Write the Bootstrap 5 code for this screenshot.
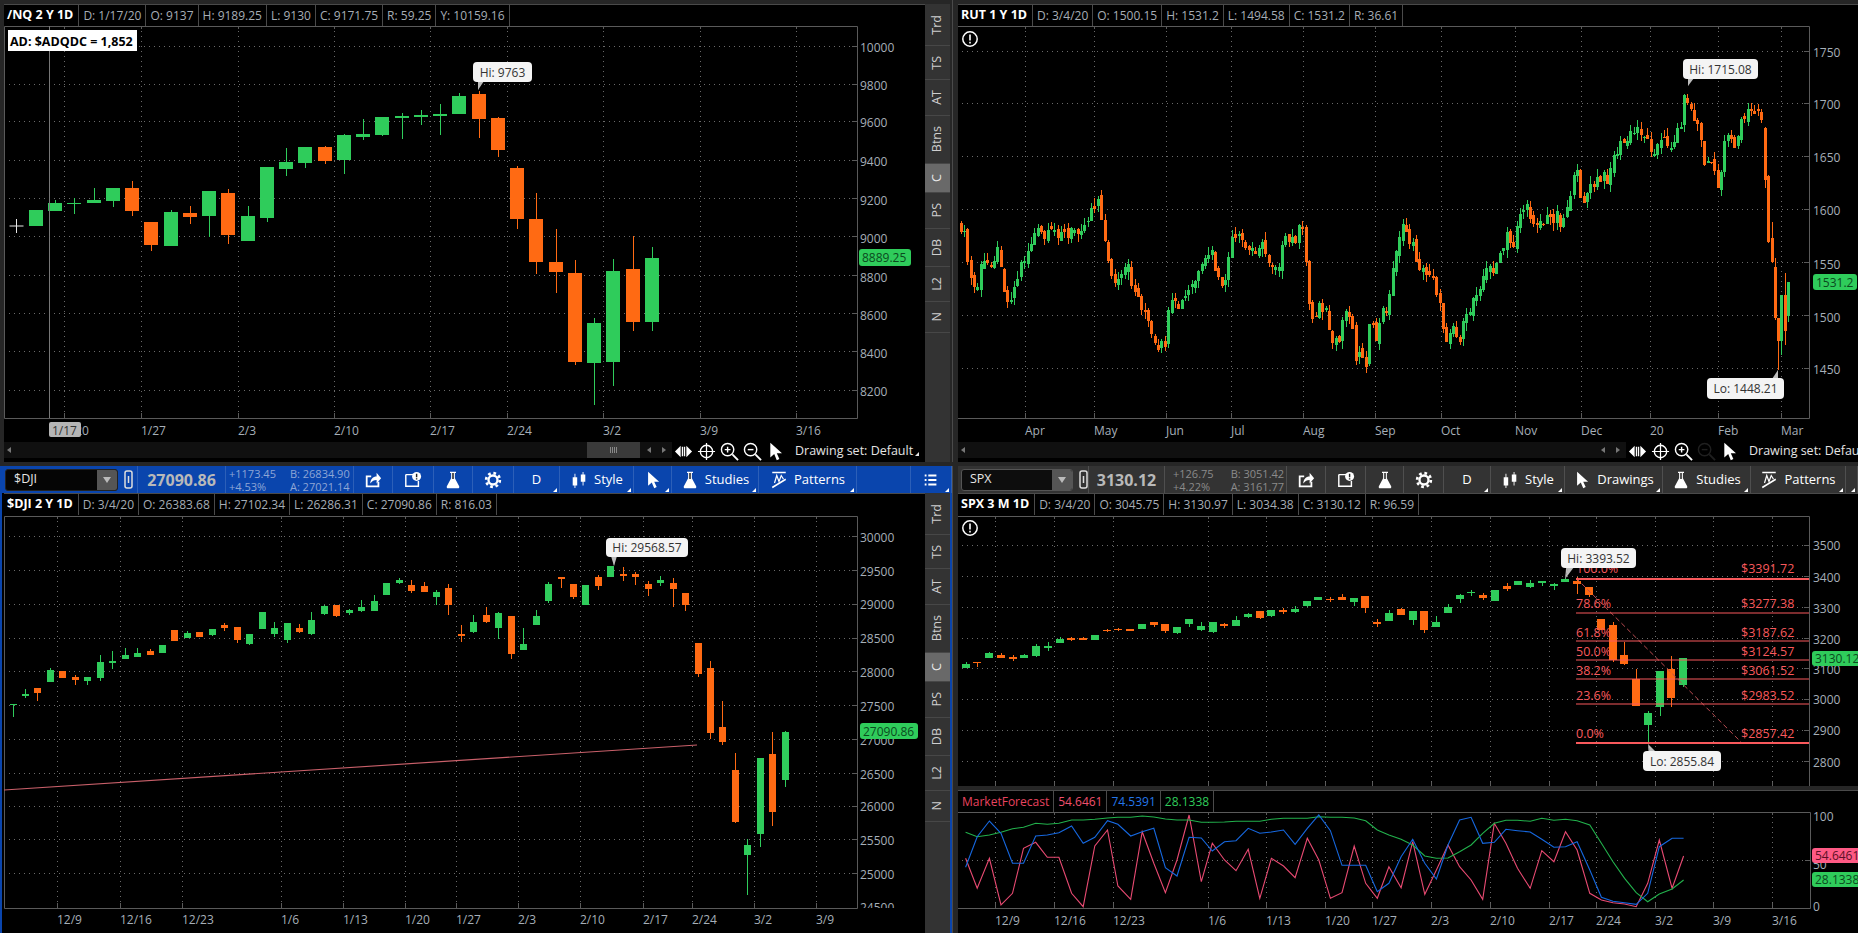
<!DOCTYPE html>
<html lang="en">
<head>
    <meta charset="UTF-8">
    <meta name="viewport" content="width=device-width, initial-scale=1.0">
    <title>Charts</title>
    <link rel="stylesheet" href="https://cdn.jsdelivr.net/npm/bootstrap@5.3.0/dist/css/bootstrap.min.css">
    <style>
        html, body {
            height: 933px;
            overflow: hidden;
        }
        body {
            background-color: #262626;
            font-family: "Open Sans", "Liberation Sans", sans-serif;
            font-size: 12px;
            line-height: 1;
            color: #a6adb5;
        }
        .ws-grid {
            display: grid;
            grid-template-columns: 952px 906px;
            grid-template-rows: 462px 467px;
            column-gap: 0;
            row-gap: 4px;
            height: 933px;
        }
        .pane-top { padding-top: 4px; }
        .pane-left { padding-left: 4px; }
        .pane-right { padding-left: 5px; border-left: 1px solid #4a4a4a; }
        .pane-dji {
            background-color: #0a45ad;
            padding: 0 2px 0 2px;
        }
        .pane-spx { padding-left: 5px; border-left: 1px solid #4a4a4a; }
        .chart-col { width: 921px; min-width: 0; }
        .dji-body { background: #262626; }
        .dji-col { width: 923px; padding-left: 2px; background: #000; }

        .qhead {
            height: 22px;
            background: #000;
            border-top: 1px solid #4a4a4a;
            flex: none;
            white-space: nowrap;
        }
        .qhead span {
            display: flex;
            align-items: center;
            padding: 0 4px;
            border-right: 1px solid #4a4a4a;
        }
        .qhead .qtitle { font-weight: 700; font-size: 12.5px; color: #fff; padding: 0 5px 0 3px; }
        .qhead .mf-name { color: #e8435f; }
        .qhead .mf-red { color: #f0506e; }
        .qhead .mf-blue { color: #2477ea; }
        .qhead .mf-green { color: #2fcc5b; }

        svg.plot {
            display: block;
            width: 100%;
            flex: 1;
            min-height: 0;
            background: #000;
            font-family: "Open Sans", "Liberation Sans", sans-serif;
            font-size: 12px;
        }
        .plot-spx { flex: none !important; height: 271px; }
        .mf-gap { height: 4px; background: #262626; flex: none; }
        .mf-head { background: #000; }

        .scroll-row {
            height: 20px;
            background: #000;
            flex: none;
            color: #e4e4e4;
            font-size: 12.5px;
            white-space: nowrap;
        }
        .scroll-track {
            height: 16px;
            background: #101010;
            position: relative;
            flex: none;
        }
        .track-nq { width: 668px; }
        .track-rut { width: 668px; }
        .scroll-thumb {
            position: absolute;
            left: 583px;
            top: 0;
            width: 53px;
            height: 16px;
            background: #3a3a3a;
        }
        .scroll-thumb::after {
            content: "";
            position: absolute;
            left: 23px;
            top: 5px;
            width: 7px;
            height: 6px;
            background: repeating-linear-gradient(90deg, #888 0 1px, transparent 1px 2px);
        }
        .arr {
            position: absolute;
            top: 5px;
            width: 0;
            height: 0;
            border-top: 3px solid transparent;
            border-bottom: 3px solid transparent;
        }
        .arr-l { border-right: 4px solid #777; }
        .arr-r { border-left: 4px solid #777; }
        .arr-a { left: 3px; }
        .arr-b { left: 643px; }
        .arr-c { left: 658px; }
        .tool-set { gap: 4px; padding-left: 2px; height: 18px; }
        .tool-set svg { width: 19px; height: 19px; display: block; flex: none; }
        .set-label { margin-left: 6px; position: relative; padding-right: 6px; }
        .set-label::after, .cell-mark::after {
            content: "";
            position: absolute;
            right: 0;
            bottom: 1px;
            border-left: 4px solid transparent;
            border-bottom: 4px solid #e4e4e4;
        }
        .tool-dim { opacity: .12; }

        .side-tabs {
            width: 25px;
            background: #333;
            flex: none;
        }
        .side-tabs div {
            display: flex;
            align-items: center;
            justify-content: center;
            border-bottom: 1px solid #474747;
            color: #cfcfcf;
            font-size: 12.5px;
        }
        .side-tabs div span { writing-mode: vertical-rl; transform: rotate(180deg); }
        .side-tabs .tab-on { background: #696969; color: #e8e8e8; }
        .h-trd { height: 42px; }
        .h-ts { height: 34px; }
        .h-at { height: 36px; }
        .h-btns { height: 48px; }
        .h-c { height: 29px; }
        .h-ps { height: 36px; }
        .h-db { height: 38px; }
        .h-l2 { height: 35px; }
        .h-n { height: 31px; }

        .tbar {
            display: grid;
            height: 27px;
            flex: none;
            align-items: center;
            color: #fff;
            white-space: nowrap;
        }
        .tbar-dji {
            background: #0a45ad;
            grid-template-columns: 136px 88px 128px 39px 41px 39px 41px 46px 74px 38px 87px 98px 54px 41px;
        }
        .tbar-spx {
            background: #333;
            grid-template-columns: 131px 76px 122px 39px 40px 38px 40px 47px 74px 98px 88px 95px 12px;
        }
        .tcell {
            height: 27px;
            display: flex;
            align-items: center;
            justify-content: center;
            gap: 6px;
            position: relative;
            border-right: 1px solid rgba(255,255,255,.14);
            font-size: 13px;
        }
        .tcell svg { width: 18px; height: 18px; flex: none; }
        .cell-mark::after { right: 2px; border-bottom-color: #fff; }
        .sym-cell { justify-content: flex-start; gap: 0; }
        .sym-box {
            margin-left: 3px;
            width: 113px;
            height: 22px;
            background: #050505;
            border: 1px solid #222;
            border-radius: 3px;
            display: flex;
            justify-content: space-between;
            align-items: center;
            padding-left: 8px;
            font-size: 12.5px;
            color: #e6e6e6;
            flex: none;
        }
        .sym-spx { width: 112px; background: #0d0d0d; border-color: #555; }
        .sym-drop {
            width: 20px;
            height: 20px;
            background: #555;
            display: flex;
            align-items: center;
            justify-content: center;
            border-radius: 0 2px 2px 0;
        }
        .sym-drop::after {
            content: "";
            border-left: 4px solid transparent;
            border-right: 4px solid transparent;
            border-top: 6px solid #bbb;
        }
        .tcell svg.link-ico { width: 12px; height: 20px; margin-left: 5px; }
        .tlast { font-size: 16px; font-weight: 700; color: #b9b9b9; }
        .tdelta {
            justify-content: flex-start;
            gap: 14px;
            padding-left: 3px;
            font-size: 11px;
            line-height: 13px;
        }
        .tbar-dji .tdelta { color: #8ea6d6; }
        .tbar-spx .tdelta { color: #8b8b8b; padding-left: 8px; gap: 17px; }
    </style>
</head>
<body>
    <!-- shared toolbar icons -->
    <svg width="0" height="0" class="position-absolute">
        <symbol id="i-share" viewBox="0 0 20 20">
            <path fill="#fff" d="M2 5h6v2H4v9h11v-4h2v6H2z"/>
            <path fill="#fff" d="M7 14c0-5 3-8 7-8V2l5 6-5 6V10c-3 0-5 1-7 4z"/>
        </symbol>
        <symbol id="i-alert" viewBox="0 0 20 20">
            <path fill="none" stroke="#fff" stroke-width="1.6" d="M2 4h10M2 4v13h14v-6"/>
            <circle cx="14" cy="6" r="5" fill="#fff"/>
            <path stroke="#222" stroke-width="1.6" d="M14 3v4M14 8v1.4"/>
        </symbol>
        <symbol id="i-flask" viewBox="0 0 20 24">
            <path fill="#fff" d="M6 1h8v1.6h-1.5v7.2l5.7 10.4c.6 1.2-.2 2.8-1.6 2.8H3.4c-1.4 0-2.2-1.6-1.6-2.8L7.5 9.8V2.6H6z"/>
            <path fill="#222" opacity=".85" d="M8.8 2.6h2.4v8H8.8z"/>
        </symbol>
        <symbol id="i-gear" viewBox="0 0 20 20">
            <circle cx="10" cy="10" r="7.6" fill="none" stroke="#fff" stroke-width="3" stroke-dasharray="3 3"/>
            <circle cx="10" cy="10" r="5" fill="none" stroke="#fff" stroke-width="2.6"/>
        </symbol>
        <symbol id="i-style" viewBox="0 0 20 20">
            <path fill="#fff" d="M3 7h5v9H3zM5 3h1v16H5zM12 4h5v8h-5zM14 1h1v15h-1z"/>
        </symbol>
        <symbol id="i-arrow" viewBox="0 0 20 22">
            <path fill="#fff" d="M4 1v17l4.5-4 3 7 3-1.4-3-6.6h6z"/>
        </symbol>
        <symbol id="i-patterns" viewBox="0 0 22 24">
            <path fill="#fff" d="M2 1h18v2H2z"/>
            <path fill="none" stroke="#fff" stroke-width="1.6" d="M5 16 8 6l3 8 3-8 3 5"/>
            <path stroke="#fff" stroke-width="2" d="M2 22 20 11"/>
        </symbol>
        <symbol id="i-menu" viewBox="0 0 20 20">
            <path fill="#fff" d="M3 4h2v2H3zM7 4h9v2H7zM3 9h2v2H3zM7 9h9v2H7zM3 14h2v2H3zM7 14h9v2H7z"/>
        </symbol>
        <symbol id="i-link" viewBox="0 0 12 20">
            <rect x="2" y="1" width="7" height="17" rx="2" fill="none" stroke="#ddd" stroke-width="1.5"/>
            <path stroke="#ddd" stroke-width="1.5" d="M5.5 6v7"/>
        </symbol>
        <symbol id="i-pan" viewBox="0 0 20 20">
            <path fill="#fff" d="M7 4v12L1 10zM13 4v12l6-6zM8.2 5h1.4v10H8.2zM10.4 5h1.4v10h-1.4z"/>
        </symbol>
        <symbol id="i-cross" viewBox="0 0 20 20">
            <circle cx="10" cy="10" r="6.5" fill="none" stroke="#fff" stroke-width="1.5"/>
            <path stroke="#fff" stroke-width="1.3" d="M10 1v18M1 10h18"/>
        </symbol>
        <symbol id="i-zin" viewBox="0 0 20 20">
            <circle cx="8" cy="8" r="6.5" fill="none" stroke="#fff" stroke-width="1.5"/>
            <path stroke="#fff" stroke-width="1.5" d="M5 8h6M8 5v6"/>
            <path stroke="#fff" stroke-width="2" d="M13 13l6 6"/>
        </symbol>
        <symbol id="i-zout" viewBox="0 0 20 20">
            <circle cx="8" cy="8" r="6.5" fill="none" stroke="#fff" stroke-width="1.5"/>
            <path stroke="#fff" stroke-width="1.5" d="M5 8h6"/>
            <path stroke="#fff" stroke-width="2" d="M13 13l6 6"/>
        </symbol>
    </svg>

    <div class="ws-grid">
        <!-- /NQ -->
        <div class="pane-top pane-left d-flex">
            <div class="chart-col d-flex flex-column">
                <div class="qhead d-flex">
                    <span class="qtitle">/NQ 2 Y 1D</span>
                    <span>D: 1/17/20</span><span>O: 9137</span><span>H: 9189.25</span><span>L: 9130</span><span>C: 9171.75</span><span>R: 59.25</span><span>Y: 10159.16</span>
                </div>
                <svg class="plot" id="chart-nq"></svg>
                <div class="scroll-row d-flex align-items-start">
                    <div class="scroll-track track-nq">
                        <i class="arr arr-l arr-a"></i>
                        <div class="scroll-thumb"></div>
                        <i class="arr arr-l arr-b"></i>
                        <i class="arr arr-r arr-c"></i>
                    </div>
                    <div class="tool-set d-flex align-items-center">
                        <svg><use href="#i-pan"/></svg><svg><use href="#i-cross"/></svg><svg><use href="#i-zin"/></svg><svg><use href="#i-zout"/></svg><svg><use href="#i-arrow"/></svg>
                        <span class="set-label">Drawing set: Default</span>
                    </div>
                </div>
            </div>
            <div class="side-tabs">
                <div class="h-trd"><span>Trd</span></div><div class="h-ts"><span>TS</span></div><div class="h-at"><span>AT</span></div><div class="h-btns"><span>Btns</span></div><div class="h-c tab-on"><span>C</span></div><div class="h-ps"><span>PS</span></div><div class="h-db"><span>DB</span></div><div class="h-l2"><span>L2</span></div><div class="h-n"><span>N</span></div>
            </div>
        </div>

        <!-- RUT -->
        <div class="pane-top pane-right d-flex flex-column overflow-hidden">
            <div class="qhead d-flex">
                <span class="qtitle">RUT 1 Y 1D</span>
                <span>D: 3/4/20</span><span>O: 1500.15</span><span>H: 1531.2</span><span>L: 1494.58</span><span>C: 1531.2</span><span>R: 36.61</span>
            </div>
            <svg class="plot" id="chart-rut"></svg>
            <div class="scroll-row d-flex align-items-start">
                <div class="scroll-track track-rut">
                    <i class="arr arr-l arr-a"></i>
                    <i class="arr arr-l arr-b"></i>
                    <i class="arr arr-r arr-c"></i>
                </div>
                <div class="tool-set d-flex align-items-center">
                    <svg><use href="#i-pan"/></svg><svg><use href="#i-cross"/></svg><svg><use href="#i-zin"/></svg><svg class="tool-dim"><use href="#i-zout"/></svg><svg><use href="#i-arrow"/></svg>
                    <span class="set-label">Drawing set: Default</span>
                </div>
            </div>
        </div>

        <!-- $DJI -->
        <div class="pane-dji d-flex flex-column">
            <div class="tbar tbar-dji">
                <div class="tcell sym-cell"><div class="sym-box">$DJI<span class="sym-drop"></span></div><svg class="link-ico"><use href="#i-link"/></svg></div>
                <div class="tcell tlast">27090.86</div>
                <div class="tcell tdelta"><div>+1173.45<br>+4.53%</div><div>B: 26834.90<br>A: 27021.14</div></div>
                <div class="tcell"><svg><use href="#i-share"/></svg></div>
                <div class="tcell"><svg><use href="#i-alert"/></svg></div>
                <div class="tcell"><svg><use href="#i-flask"/></svg></div>
                <div class="tcell"><svg><use href="#i-gear"/></svg></div>
                <div class="tcell cell-mark">D</div>
                <div class="tcell cell-mark"><svg><use href="#i-style"/></svg>Style</div>
                <div class="tcell cell-mark"><svg><use href="#i-arrow"/></svg></div>
                <div class="tcell cell-mark"><svg><use href="#i-flask"/></svg>Studies</div>
                <div class="tcell cell-mark"><svg><use href="#i-patterns"/></svg>Patterns</div>
                <div class="tcell"></div>
                <div class="tcell cell-mark"><svg><use href="#i-menu"/></svg></div>
            </div>
            <div class="d-flex flex-fill dji-body">
                <div class="dji-col d-flex flex-column">
                    <div class="qhead d-flex">
                        <span class="qtitle">$DJI 2 Y 1D</span>
                        <span>D: 3/4/20</span><span>O: 26383.68</span><span>H: 27102.34</span><span>L: 26286.31</span><span>C: 27090.86</span><span>R: 816.03</span>
                    </div>
                    <svg class="plot" id="chart-dji"></svg>
                </div>
                <div class="side-tabs">
                    <div class="h-trd"><span>Trd</span></div><div class="h-ts"><span>TS</span></div><div class="h-at"><span>AT</span></div><div class="h-btns"><span>Btns</span></div><div class="h-c tab-on"><span>C</span></div><div class="h-ps"><span>PS</span></div><div class="h-db"><span>DB</span></div><div class="h-l2"><span>L2</span></div><div class="h-n"><span>N</span></div>
                </div>
            </div>
        </div>

        <!-- SPX -->
        <div class="pane-spx d-flex flex-column overflow-hidden">
            <div class="tbar tbar-spx">
                <div class="tcell sym-cell"><div class="sym-box sym-spx">SPX<span class="sym-drop"></span></div><svg class="link-ico"><use href="#i-link"/></svg></div>
                <div class="tcell tlast">3130.12</div>
                <div class="tcell tdelta"><div>+126.75<br>+4.22%</div><div>B: 3051.42<br>A: 3161.77</div></div>
                <div class="tcell"><svg><use href="#i-share"/></svg></div>
                <div class="tcell"><svg><use href="#i-alert"/></svg></div>
                <div class="tcell"><svg><use href="#i-flask"/></svg></div>
                <div class="tcell"><svg><use href="#i-gear"/></svg></div>
                <div class="tcell cell-mark">D</div>
                <div class="tcell cell-mark"><svg><use href="#i-style"/></svg>Style</div>
                <div class="tcell cell-mark"><svg><use href="#i-arrow"/></svg>Drawings</div>
                <div class="tcell cell-mark"><svg><use href="#i-flask"/></svg>Studies</div>
                <div class="tcell cell-mark"><svg><use href="#i-patterns"/></svg>Patterns</div>
                <div class="tcell cell-mark"></div>
            </div>
            <div class="qhead d-flex">
                <span class="qtitle">SPX 3 M 1D</span>
                <span>D: 3/4/20</span><span>O: 3045.75</span><span>H: 3130.97</span><span>L: 3034.38</span><span>C: 3130.12</span><span>R: 96.59</span>
            </div>
            <svg class="plot plot-spx" id="chart-spx"></svg>
            <div class="mf-gap"></div>
            <div class="qhead mf-head d-flex">
                <span class="mf-name">MarketForecast</span><span class="mf-red">54.6461</span><span class="mf-blue">74.5391</span><span class="mf-green">28.1338</span>
            </div>
            <svg class="plot" id="chart-mf"></svg>
        </div>
    </div>

    <script src="https://cdn.jsdelivr.net/npm/bootstrap@5.3.0/dist/js/bootstrap.bundle.min.js"></script>
    <script>
        const GREEN = "#2fcc5b", ORANGE = "#ff6a13", AXIS = "#5a5a5a", LABEL = "#a6afb8";

        // candles are read off the reference in page pixels: [x, bodyTop, bodyBottom, wickTop, wickBottom, colour]
        function candle(c, w) {
            const fill = c[5] == "g" ? GREEN : ORANGE;
            const left = Math.round(c[0] - w / 2);
            const wickX = left + Math.floor(w / 2);
            const top = Math.round(c[1]);
            const h = Math.max(1, Math.round(c[2]) - top);
            return `<rect x="${wickX}" y="${Math.round(c[3])}" width="1" height="${Math.max(1, Math.round(c[4]) - Math.round(c[3]))}" fill="${fill}"/>` +
                `<rect x="${left}" y="${top}" width="${w}" height="${h}" fill="${fill}"/>`;
        }

        function scaled(list, ox, oy, sx, sy) {
            return list.map(c => [ox + c[0] / sx, oy + c[1] / sy, oy + c[2] / sy, oy + c[3] / sy, oy + c[4] / sy, c[5]]);
        }

        function frame(o) {
            let s = "";
            o.grid.forEach(g => {
                s += `<path d="M${o.l} ${g}.5H${o.r}" stroke="#6a6a6a" stroke-dasharray="1 4"/>`;
                s += `<path d="M${o.r - 5} ${g}.5H${o.r}" stroke="${AXIS}"/>`;
            });
            (o.xs || []).forEach(x => {
                s += `<path d="M${x}.5 ${o.t}V${o.b}" stroke="#6a6a6a" stroke-dasharray="1 4"/>`;
                s += `<path d="M${x}.5 ${o.b - 5}V${o.b}" stroke="${AXIS}"/>`;
                s += `<path d="M${x}.5 ${o.t}V${o.t + 3}" stroke="${AXIS}"/>`;
            });
            s += `<path d="M${o.l}.5 ${o.t}.5H${o.r}.5V${o.b}.5H${o.l}.5Z" fill="none" stroke="${AXIS}"/>`;
            return s;
        }

        function yLabels(labels, x) {
            return labels.map(l => `<text x="${x}" y="${l[1]}" dominant-baseline="central" fill="${LABEL}">${l[0]}</text>`).join("");
        }

        function xLabels(labels, y) {
            return labels.map(l => `<text x="${l[1]}" y="${y}" dominant-baseline="central" fill="${LABEL}">${l[0]}</text>`).join("");
        }

        function scaleIcon(x, y) {
            return `<g fill="#fff"><rect x="${x}" y="${y}" width="18" height="2"/><rect x="${x}" y="${y + 16}" width="18" height="2"/></g>` +
                `<path d="M${x + 1} ${y + 14}C${x + 6} ${y + 13} ${x + 6} ${y + 4} ${x + 11} ${y + 4}H${x + 17}" fill="none" stroke="#fff" stroke-width="1.1"/>`;
        }

        function caution(x, y) {
            return `<circle cx="${x}" cy="${y}" r="7.2" fill="none" stroke="#fff" stroke-width="1.5"/>` +
                `<path d="M${x} ${y - 4.5}v6M${x} ${y + 2.8}v1.8" stroke="#fff" stroke-width="1.6"/>`;
        }

        function tip(text, x1, y1, x2, y2, px, py, bx) {
            return `<path d="M${bx} ${y2 - 1}L${px} ${py}L${bx + 6} ${y2 - 1}Z" fill="#bdbdbd"/>` +
                `<path d="M${bx} ${y1 + 1}L${px} ${py}L${bx + 6} ${y1 + 1}Z" fill="#bdbdbd"/>` +
                `<rect x="${x1}" y="${y1}" width="${x2 - x1}" height="${y2 - y1}" rx="4" fill="#f4f4f4"/>` +
                `<text x="${(x1 + x2) / 2}" y="${(y1 + y2) / 2}" text-anchor="middle" dominant-baseline="central" fill="#333">${text}</text>`;
        }

        function chip(text, x1, y1, x2, y2, bg, fg) {
            return `<rect x="${x1}" y="${y1}" width="${x2 - x1}" height="${y2 - y1}" rx="3" fill="${bg}"/>` +
                `<text x="${x1 + 3}" y="${(y1 + y2) / 2}" dominant-baseline="central" fill="${fg}">${text}</text>`;
        }

        function paint(id, html) {
            const svg = document.getElementById(id);
            const r = svg.getBoundingClientRect();
            svg.setAttribute("viewBox", `${r.left} ${r.top} ${r.width} ${r.height}`);
            svg.innerHTML = html;
        }

        // ---------- /NQ ----------
        const nqData = [[91,630,678,630,678,"g"],[139,609,633,600,633,"g"],[187,609,611,595,643,"g"],[237,600,608,565,608,"g"],[285,564,603,564,622,"g"],[334,564,633,544,647,"o"],[382,666,735,666,753,"o"],[432,636,738,630,738,"g"],[480,639,651,618,671,"o"],[528,573,648,573,710,"g"],[576,579,705,567,731,"o"],[627,648,723,618,723,"g"],[675,501,654,501,667,"g"],[723,486,507,445,527,"g"],[771,441,489,441,503,"g"],[822,441,483,438,491,"o"],[870,405,480,403,521,"g"],[918,402,411,358,421,"g"],[966,351,405,350,409,"g"],[1016,348,354,340,416,"g"],[1064,345,351,331,374,"g"],[1112,342,348,312,404,"g"],[1161,288,342,280,342,"g"],[1211,282,357,272,413,"o"],[1259,354,450,351,472,"o"],[1307,504,657,498,686,"o"],[1355,657,786,580,822,"o"],[1405,786,816,688,879,"o"],[1454,819,1086,781,1094,"o"],[1502,969,1089,955,1214,"g"],[1550,813,1086,778,1157,"g"],[1601,807,966,709,992,"o"],[1649,774,966,740,994,"g"]];
        const nqGrid = [46,84,121,160,198,236,275,313,351,390];
        const nqXs = [64,141,238,334,430,507,603,700,796];
        paint("chart-nq",
            frame({l:4, t:26, r:857, b:418, grid:nqGrid, xs:nqXs}) +
            scaled(nqData, 0, 0, 2.529, 3).map(c => candle(c, 14)).join("") +
            `<path d="M49.5 26V418" stroke="#777"/>` +
            `<path d="M9.5 226H23.5M16.5 219V233" stroke="#e8e8e8"/>` +
            yLabels([[10000,47],[9800,85],[9600,122],[9400,161],[9200,200],[9000,238],[8800,277],[8600,315],[8400,353],[8200,391]], 860) +
            xLabels([["1/20",64],["1/27",141],["2/3",238],["2/10",334],["2/17",430],["2/24",507],["3/2",603],["3/9",700],["3/16",796]], 430) +
            `<rect x="49" y="422" width="32" height="15" rx="2" fill="#b5b5b5"/><text x="52" y="430" dominant-baseline="central" fill="#333">1/17</text>` +
            `<rect x="8" y="30" width="129" height="21" fill="#fff"/><text x="10" y="41" dominant-baseline="central" font-weight="700" font-size="12.5" fill="#000">AD: $ADQDC = 1,852</text>` +
            tip("Hi: 9763", 473, 62, 532, 82, 478, 90, 478) +
            chip("8889.25", 859, 249, 911, 266, GREEN, "#0b4a1e") +
            scaleIcon(862, 6));

        // ---------- RUT ----------
        const rutPath = [[961,225],[965,240],[969,270],[973,288],[978,285],[982,265],[987,262],[993,258],[998,252],[1003,262],[1006,308],[1010,295],[1014,290],[1017,280],[1022,262],[1028,250],[1034,235],[1040,232],[1046,240],[1052,232],[1058,230],[1064,228],[1066,242],[1072,232],[1079,225],[1086,225],[1092,205],[1098,197],[1103,232],[1106,240],[1112,280],[1120,285],[1127,265],[1135,290],[1145,310],[1150,330],[1158,355],[1166,340],[1170,306],[1180,307],[1193,285],[1203,270],[1210,250],[1213,257],[1217,273],[1222,293],[1225,280],[1230,253],[1233,240],[1242,240],[1248,252],[1260,243],[1270,260],[1278,265],[1285,243],[1293,240],[1302,227],[1305,253],[1308,277],[1311,320],[1315,320],[1320,297],[1328,317],[1333,350],[1340,340],[1344,313],[1350,310],[1357,357],[1363,353],[1367,360],[1370,327],[1377,337],[1383,313],[1390,297],[1395,253],[1400,232],[1407,230],[1413,247],[1425,277],[1432,267],[1437,290],[1442,320],[1447,337],[1452,320],[1458,340],[1467,320],[1475,293],[1485,273],[1500,260],[1507,237],[1513,247],[1517,223],[1523,207],[1533,217],[1543,223],[1557,213],[1563,223],[1570,193],[1577,175],[1583,200],[1595,183],[1607,177],[1617,150],[1630,137],[1640,127],[1647,140],[1653,148],[1667,140],[1673,145],[1680,127],[1684,103],[1687,93],[1692,113],[1700,127],[1703,160],[1713,163],[1717,193],[1720,177],[1727,127],[1733,140],[1737,147],[1740,123],[1748,113],[1757,110],[1762,117]];

        function pseudo(i) {
            const s = Math.sin(i * 12.9898) * 43758.5453;
            return s - Math.floor(s);
        }

        function pathY(path, x) {
            for (let i = 1; i < path.length; i++) {
                if (x <= path[i][0]) {
                    const a = path[i - 1], b = path[i];
                    return a[1] + (b[1] - a[1]) * (x - a[0]) / (b[0] - a[0]);
                }
            }
            return path[path.length - 1][1];
        }

        // a year of daily bars is too dense to read one by one, so they follow the traced close with some jitter
        const rutData = [];
        let prev = 222, step = 0;
        for (let x = 961; x < 1763; x += 3.35) {
            step++;
            const close = pathY(rutPath, x) + (pseudo(step) - 0.5) * 15;
            const open = prev + (pseudo(step + 500) - 0.5) * 7;
            const top = Math.min(open, close), bot = Math.max(open, close);
            rutData.push([x, top, bot + 1, top - pseudo(step + 900) * 8, bot + pseudo(step + 1300) * 9, close < open ? "g" : "o"]);
            prev = close;
        }
        const rutEnd = scaled([[797,205,360,200,385,"o"],[806,348,545,345,550,"o"],[817,535,605,485,610,"o"],[826,622,775,595,780,"o"],[835,775,842,775,930,"o"],[845,705,842,705,885,"g"],[856,705,812,640,855,"o"],[865,666,767,666,785,"g"]], 1500, 60, 3, 3);
        paint("chart-rut",
            frame({l:957, t:26, r:1809, b:418, grid:[51,103,156,209,262,315,368], xs:[1025,1094,1166,1231,1303,1375,1441,1515,1581,1650,1718,1781]}) +
            rutData.concat(rutEnd).map(c => candle(c, 3)).join("") +
            yLabels([[1750,52],[1700,104],[1650,157],[1600,210],[1550,264],[1500,317],[1450,369]], 1813) +
            xLabels([["Apr",1025],["May",1094],["Jun",1166],["Jul",1231],["Aug",1303],["Sep",1375],["Oct",1441],["Nov",1515],["Dec",1581],["20",1650],["Feb",1718],["Mar",1781]], 430) +
            caution(970, 39) +
            tip("Hi: 1715.08", 1683, 59, 1758, 79, 1688, 86, 1688) +
            tip("Lo: 1448.21", 1707, 378, 1784, 399, 1778, 370, 1772) +
            chip("1531.2", 1813, 274, 1857, 290, GREEN, "#0b4a1e") +
            scaleIcon(1821, 6));

        // ---------- $DJI ----------
        const djiData = [[30,491,493,491,530,"g"],[57,462,468,448,473,"g"],[84,444,459,444,483,"o"],[113,390,426,385,426,"g"],[140,393,414,392,414,"o"],[169,411,420,404,434,"o"],[196,411,423,411,435,"g"],[225,366,414,345,422,"g"],[252,363,369,333,388,"g"],[281,345,357,325,357,"g"],[308,339,351,325,351,"g"],[337,333,345,327,345,"o"],[364,315,339,315,339,"g"],[391,270,303,270,303,"o"],[420,279,294,274,294,"g"],[447,276,291,276,291,"o"],[476,267,285,267,287,"g"],[503,255,264,250,272,"o"],[532,261,300,261,308,"o"],[559,282,312,282,316,"g"],[588,216,267,216,267,"g"],[615,264,282,246,292,"g"],[644,249,300,249,308,"g"],[671,264,276,252,278,"o"],[698,240,282,216,285,"g"],[727,198,222,195,224,"g"],[754,195,228,195,232,"o"],[783,210,219,208,226,"g"],[810,201,213,181,216,"g"],[839,183,213,165,213,"g"],[866,129,165,129,165,"g"],[895,120,129,115,132,"g"],[922,135,153,120,160,"o"],[951,138,156,126,156,"o"],[978,156,171,151,196,"g"],[1005,144,195,132,224,"o"],[1034,282,288,255,305,"o"],[1061,246,276,225,278,"g"],[1090,225,246,201,248,"o"],[1117,219,264,215,297,"g"],[1146,228,342,228,358,"o"],[1173,312,330,264,330,"g"],[1202,228,255,210,255,"g"],[1229,132,183,127,190,"g"],[1258,111,117,111,143,"o"],[1285,132,171,132,178,"o"],[1312,135,195,135,195,"g"],[1341,111,138,105,149,"o"],[1368,78,111,78,111,"g"],[1397,102,108,81,123,"o"],[1424,102,111,96,135,"o"],[1453,132,147,123,167,"o"],[1480,120,129,108,137,"g"],[1509,129,147,114,200,"o"],[1536,159,195,159,212,"o"]];
        const djiEnd = [[175,8,102,8,110,"o"],[211,84,279,63,296,"o"],[247,261,306,184,316,"o"],[286,390,546,340,548,"o"],[322,615,645,597,765,"g"],[361,354,582,354,620,"g"],[397,342,516,277,557,"o"],[436,276,420,272,440,"g"]];
        paint("chart-dji",
            frame({l:4, t:516, r:857, b:908, grid:[536,570,604,638,671,705,739,773,806,839,873], xs:[57,120,182,281,343,405,456,518,580,643,692,754,816]}) +
            scaled(djiData, 0, 540, 2.24, 3).concat(scaled(djiEnd, 640, 640, 3, 3)).map(c => candle(c, 7)).join("") +
            `<path d="M4 790L697 745" stroke="#c9606a" stroke-width="1.2"/>` +
            yLabels([[30000,537],[29500,571],[29000,604],[28500,638],[28000,672],[27500,706],[27000,740],[26500,774],[26000,806],[25500,840],[25000,874]], 860) +
            `<svg x="858" y="900" width="50" height="8" overflow="hidden" viewBox="858 900 50 8"><text x="860" y="907" dominant-baseline="central" fill="${LABEL}">24500</text></svg>` +
            xLabels([["12/9",57],["12/16",120],["12/23",182],["1/6",281],["1/13",343],["1/20",405],["1/27",456],["2/3",518],["2/10",580],["2/17",643],["2/24",692],["3/2",754],["3/9",816]], 919) +
            tip("Hi: 29568.57", 606, 538, 688, 557, 614, 566, 611) +
            chip("27090.86", 860, 723, 918, 739, GREEN, "#0b4a1e") +
            scaleIcon(862, 497));

        // ---------- SPX ----------
        const spxData = [[15,282,294,277,294,"g"],[42,276,279,276,290,"o"],[73,249,264,246,264,"g"],[104,255,264,249,264,"o"],[134,261,267,255,272,"o"],[162,255,264,252,264,"g"],[192,228,258,222,261,"g"],[222,228,234,216,243,"g"],[253,207,219,201,219,"g"],[281,204,210,202,214,"o"],[311,204,210,202,210,"o"],[341,195,210,195,210,"g"],[371,180,183,176,187,"o"],[400,177,180,174,182,"o"],[430,177,183,177,183,"o"],[460,162,177,162,177,"g"],[491,156,165,156,171,"o"],[518,162,183,162,188,"o"],[549,171,189,171,192,"g"],[579,147,162,147,171,"g"],[609,168,180,156,182,"g"],[640,156,186,155,188,"g"],[668,162,168,159,174,"o"],[698,150,168,138,168,"g"],[728,132,141,129,143,"g"],[759,123,144,123,147,"o"],[787,120,138,120,140,"g"],[817,120,126,114,131,"o"],[847,117,126,108,128,"g"],[877,93,108,93,110,"g"],[905,81,90,81,91,"g"],[935,87,90,81,95,"o"],[966,81,90,72,90,"o"],[996,84,96,84,108,"g"],[1024,78,114,78,129,"o"],[1054,156,162,147,171,"o"],[1085,129,153,120,153,"g"],[1115,117,135,114,136,"o"],[1146,123,150,123,165,"g"],[1173,123,180,123,188,"o"],[1204,156,171,138,171,"g"],[1234,111,129,102,129,"g"],[1264,75,87,72,99,"g"],[1292,66,69,60,77,"g"],[1323,75,84,69,90,"o"],[1353,60,93,60,93,"g"],[1383,48,57,39,63,"o"],[1411,33,45,33,45,"g"],[1441,39,51,30,54,"g"],[1472,33,39,33,47,"g"],[1502,42,48,39,60,"g"],[1530,27,36,24,36,"g"],[1560,33,42,21,72,"o"]];
        const spxEnd = [[267,141,165,141,172,"o"],[303,237,270,237,270,"o"],[339,255,360,246,366,"o"],[372,345,372,306,375,"o"],[408,417,498,387,498,"o"],[444,519,555,513,609,"g"],[480,393,501,393,528,"g"],[513,387,474,348,500,"o"],[549,354,435,354,440,"g"]];
        const FIB = "#f9595c";
        const fib = [["100.0%","$3391.72",579,568,2],["78.6%","$3277.38",613,603,1],["61.8%","$3187.62",641,632,1],["50.0%","$3124.57",660,651,1],["38.2%","$3061.52",679,670,1],["23.6%","$2983.52",704,695,1],["0.0%","$2857.42",743,733,2]];
        const spxXs = [995,1054,1113,1208,1266,1325,1372,1431,1490,1549,1596,1655,1713,1772];
        paint("chart-spx",
            frame({l:957, t:516, r:1809, b:787, grid:[545,576,607,638,668,699,730,761], xs:spxXs}) +
            scaled(spxData, 960, 570, 2.529, 3).concat(scaled(spxEnd, 1500, 540, 3, 3)).map(c => candle(c, 8)).join("") +
            `<path d="M1576 578L1742 743" stroke="#b94a50" stroke-dasharray="5 3"/>` +
            fib.map(f => `<path d="M1576 ${f[2]}H1809" stroke="${FIB}" stroke-width="${f[4]}"/>` +
                `<text x="1576" y="${f[3]}" dominant-baseline="central" fill="${FIB}" font-size="12.5">${f[0]}</text>` +
                `<text x="1741" y="${f[3]}" dominant-baseline="central" fill="${FIB}" font-size="12.5">${f[1]}</text>`).join("") +
            yLabels([[3500,545],[3400,577],[3300,608],[3200,639],[3100,669],[3000,699],[2900,730],[2800,762]], 1813) +
            caution(970, 528) +
            tip("Hi: 3393.52", 1561, 548, 1636, 568, 1565, 579, 1568) +
            tip("Lo: 2855.84", 1643, 751, 1721, 771, 1648, 744, 1650) +
            chip("3130.12", 1812, 651, 1864, 666, GREEN, "#0b4a1e") +
            scaleIcon(1821, 497));

        // ---------- MarketForecast ----------
        const mfPink = [27,235,47,325,68,235,88,375,108,340,127,205,148,187,168,232,188,232,210,340,230,380,250,198,272,150,290,318,312,358,332,155,352,250,372,338,392,240,413,105,434,305,453,190,474,240,494,272,515,208,535,355,555,235,576,258,596,293,617,175,637,240,657,355,677,338,698,198,718,310,738,355,758,260,779,323,799,185,820,343,840,270,860,195,880,260,900,300,920,358,940,130,960,190,980,265,1002,325,1022,212,1043,245,1063,155,1083,210,1105,340,1125,360,1145,368,1165,372,1185,380,1205,310,1225,180,1247,325,1267,228];
        const mfBlue = [27,262,47,170,68,123,88,160,108,250,127,250,148,168,168,165,188,158,210,138,230,190,250,172,272,122,290,133,312,168,332,155,352,145,372,263,392,288,413,172,434,174,453,213,474,185,494,182,515,145,535,160,555,156,576,150,596,193,617,145,637,105,657,152,677,256,698,256,718,256,738,335,758,310,779,230,799,178,820,250,840,297,860,195,880,120,900,112,920,190,940,187,960,148,980,152,1002,156,1022,178,1043,202,1063,200,1083,185,1105,270,1125,352,1145,364,1165,368,1185,373,1205,340,1225,200,1247,175,1267,175];
        const mfGreen = [27,157,47,170,68,165,88,157,108,146,127,142,148,130,168,133,188,130,210,120,230,120,250,118,272,114,290,112,312,112,332,108,352,111,372,117,392,120,413,120,434,127,453,127,474,126,494,124,515,124,535,124,555,118,576,115,596,115,617,115,637,110,657,112,677,112,698,114,718,122,738,150,758,165,779,178,799,195,820,228,840,235,860,234,880,215,900,195,920,160,940,130,960,121,980,121,1002,124,1022,115,1043,121,1063,118,1083,122,1105,135,1125,190,1145,245,1165,295,1185,338,1205,365,1225,342,1247,327,1267,300];

        function mfLine(v, colour) {
            let pts = "";
            for (let i = 0; i < v.length; i += 2) {
                pts += (950 + v[i] / 1.727).toFixed(1) + "," + (780 + v[i + 1] / 3).toFixed(1) + " ";
            }
            return `<polyline points="${pts}" fill="none" stroke="${colour}" stroke-width="1.1"/>`;
        }

        paint("chart-mf",
            frame({l:957, t:812, r:1810, b:908, grid:[860], xs:spxXs}) +
            mfLine(mfPink, "#e84a72") + mfLine(mfGreen, "#22b14c") + mfLine(mfBlue, "#1668e0") +
            yLabels([[100,816],[50,864],[0,906]], 1813) +
            xLabels([["12/9",995],["12/16",1054],["12/23",1113],["1/6",1208],["1/13",1266],["1/20",1325],["1/27",1372],["2/3",1431],["2/10",1490],["2/17",1549],["2/24",1596],["3/2",1655],["3/9",1713],["3/16",1772]], 920) +
            chip("54.6461", 1812, 848, 1864, 863, "#ff5a85", "#5c1026") +
            chip("28.1338", 1812, 872, 1864, 887, GREEN, "#0b4a1e"));
    </script>
</body>
</html>
